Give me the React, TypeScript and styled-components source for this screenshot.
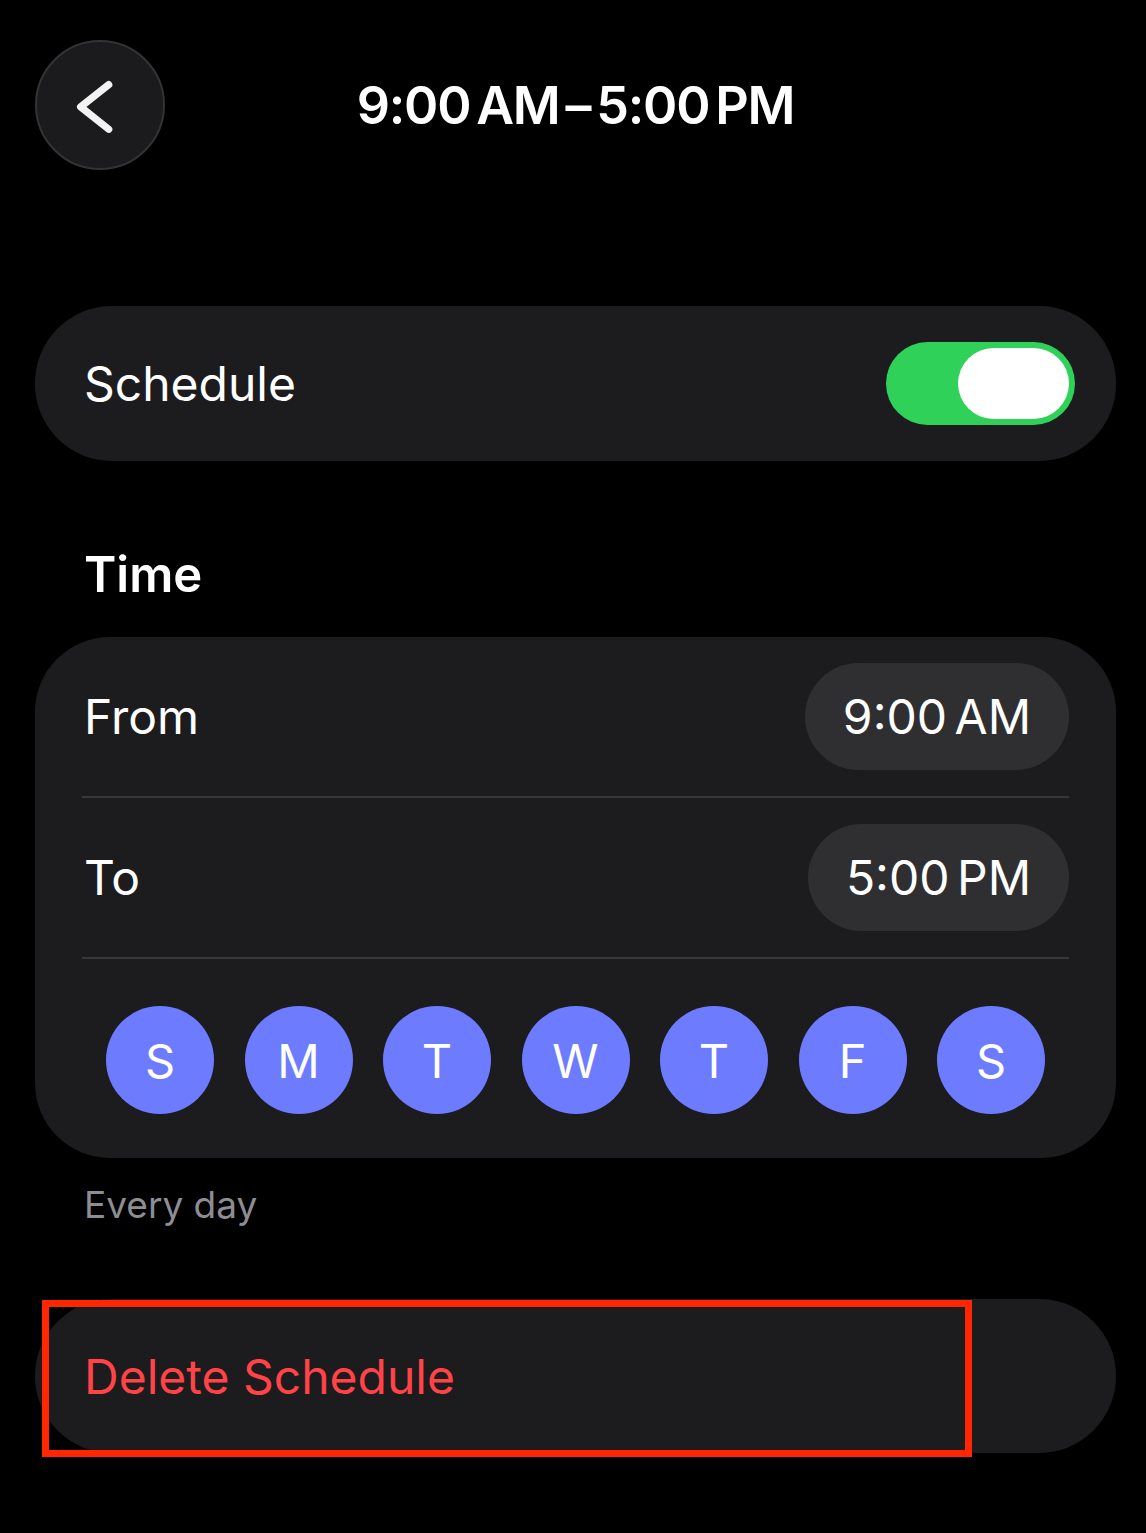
import React from 'react'
import styled, { createGlobalStyle } from 'styled-components'

const GlobalStyle = createGlobalStyle`
  html, body {
    margin: 0;
    padding: 0;
    background: #000;
  }
  body {
    font-family: Inter, "Noto Sans", "Liberation Sans", sans-serif;
    color: #fff;
    -webkit-font-smoothing: antialiased;
  }
`

const Page = styled.div`
  width: 1146px;
  min-height: 1533px;
  box-sizing: border-box;
  padding: 40px 30px 0 35px;
  background: #000;
`

const Header = styled.div`
  display: grid;
  grid-template-columns: 130px 1fr 130px;
  align-items: center;
  height: 130px;
`

const BackButton = styled.button`
  width: 130px;
  height: 130px;
  border-radius: 50%;
  background: #1b1b1d;
  border: 2px solid #333336;
  box-sizing: border-box;
  padding: 0;
  display: flex;
  align-items: center;
  justify-content: center;
  cursor: pointer;
`

const Title = styled.h1`
  margin: 0;
  text-align: center;
  font-size: 52px;
  font-weight: 600;
  letter-spacing: -1.2px;
  word-spacing: -6px;
  color: #fff;
`

const Card = styled.div`
  background: #1c1c1e;
  border-radius: 77px;
`

const ToggleRow = styled(Card)`
  height: 155px;
  margin-top: 136px;
  box-sizing: border-box;
  padding: 0 41px 0 49px;
  display: flex;
  align-items: center;
  justify-content: space-between;
`

const RowLabel = styled.span<{ $color?: string }>`
  font-size: 48px;
  font-weight: 400;
  color: ${p => p.$color || '#fff'};
`

const Switch = styled.div<{ $on: boolean }>`
  width: 189px;
  height: 83px;
  border-radius: 42px;
  background: ${p => (p.$on ? '#30d158' : '#39393d')};
  box-sizing: border-box;
  padding: 6px;
  display: flex;
  justify-content: ${p => (p.$on ? 'flex-end' : 'flex-start')};
`

const Knob = styled.div`
  width: 111px;
  height: 71px;
  border-radius: 36px;
  background: #fff;
`

const SectionLabel = styled.h2`
  margin: 84px 0 32px;
  padding-left: 49px;
  font-size: 49px;
  line-height: 60px;
  font-weight: 600;
  color: #fff;
`

const TimeCard = styled(Card)`
  border-radius: 75px;
  padding: 0 47px;
`

const TimeRow = styled.div`
  height: 159px;
  display: flex;
  align-items: center;
  justify-content: space-between;
  border-bottom: 2px solid #38383a;
  padding-left: 2px;
`

const TimePill = styled.div`
  height: 107px;
  border-radius: 54px;
  background: #2f2f32;
  display: flex;
  align-items: center;
  padding: 0 38px;
  font-size: 48px;
  word-spacing: -6px;
  color: #fff;
`

const DaysRow = styled.div`
  display: flex;
  justify-content: center;
  gap: 30.5px;
  padding: 47px 0 44px;
`

const Day = styled.div<{ $active: boolean }>`
  width: 108px;
  height: 108px;
  border-radius: 50%;
  background: ${p => (p.$active ? '#6d7cff' : '#2f2f32')};
  color: #fff;
  font-size: 47px;
  display: flex;
  align-items: center;
  justify-content: center;
`

const Footnote = styled.p`
  margin: 24px 0 0;
  padding-left: 49px;
  font-size: 37px;
  color: #8d8d93;
`

const DeleteWrap = styled.div`
  position: relative;
  margin-top: 72px;
`

const DeleteRow = styled(ToggleRow)`
  margin-top: 0;
  height: 154px;
`

const Highlight = styled.div`
  position: absolute;
  left: 7px;
  top: 1px;
  width: 930px;
  height: 157px;
  box-sizing: border-box;
  border: 7px solid #ff2600;
  pointer-events: none;
`

const days = ['S', 'M', 'T', 'W', 'T', 'F', 'S']

const App: React.FC = () => (
  <>
    <GlobalStyle />
    <Page>
      <Header>
        <BackButton aria-label="Back">
          <svg width="130" height="130" viewBox="0 0 130 130">
            <path
              d="M74 44 L45 67 L74 90"
              fill="none"
              stroke="#f2f2f2"
              strokeWidth="7.5"
              strokeLinecap="round"
              strokeLinejoin="round"
            />
          </svg>
        </BackButton>
        <Title>9:00 AM – 5:00 PM</Title>
        <div />
      </Header>

      <ToggleRow>
        <RowLabel>Schedule</RowLabel>
        <Switch $on>
          <Knob />
        </Switch>
      </ToggleRow>

      <SectionLabel>Time</SectionLabel>
      <TimeCard>
        <TimeRow>
          <RowLabel>From</RowLabel>
          <TimePill>9:00 AM</TimePill>
        </TimeRow>
        <TimeRow>
          <RowLabel>To</RowLabel>
          <TimePill>5:00 PM</TimePill>
        </TimeRow>
        <DaysRow>
          {days.map((d, i) => (
            <Day key={i} $active>
              {d}
            </Day>
          ))}
        </DaysRow>
      </TimeCard>
      <Footnote>Every day</Footnote>

      <DeleteWrap>
        <DeleteRow>
          <RowLabel $color="#ff4347">Delete Schedule</RowLabel>
        </DeleteRow>
        <Highlight />
      </DeleteWrap>
    </Page>
  </>
)

export default App
